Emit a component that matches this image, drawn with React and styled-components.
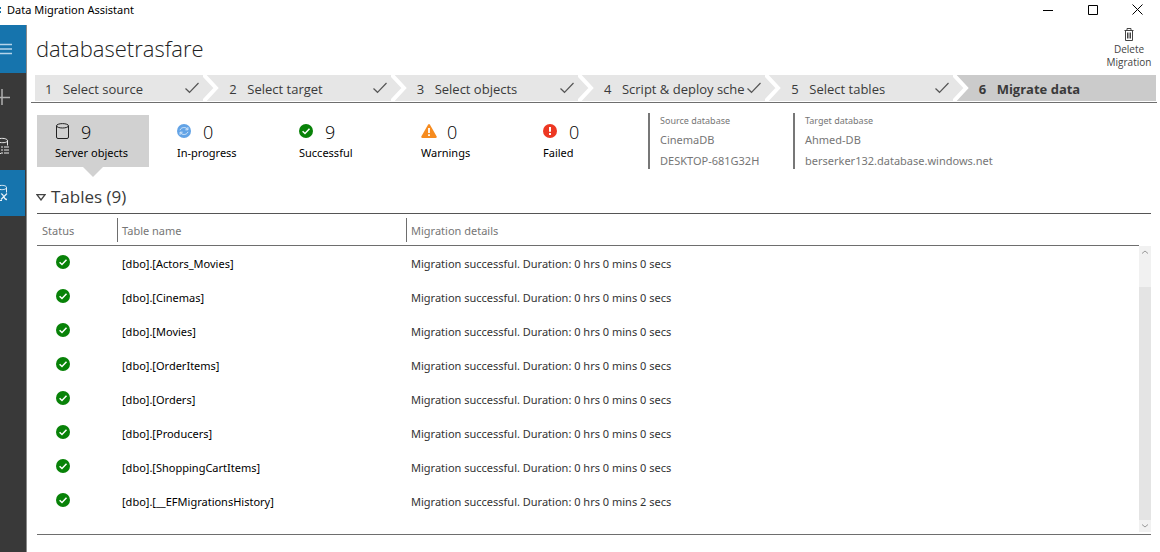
import React from "react";
import styled, { createGlobalStyle, css } from "styled-components";

const GlobalStyle = createGlobalStyle`
  * { box-sizing: border-box; }
  body {
    margin: 0;
    background: #fff;
    color: #000;
    font-family: "Noto Sans", "Open Sans", sans-serif;
    font-size: 11px;
    line-height: 16px;
  }
  button {
    border: 0;
    padding: 0;
    background: none;
    color: inherit;
    font: inherit;
    text-align: left;
  }
  h1, h2, p, ol, dl, dd { margin: 0; padding: 0; font-weight: inherit; }
  svg { display: block; flex: none; }
`;

const Window = styled.div`
  display: flex;
  flex-direction: column;
  min-height: 100vh;
`;

const TitleBar = styled.header`
  display: flex;
  align-items: center;
  height: 25px;
  padding-bottom: 6px;
`;

const AppTitle = styled.span`
  flex: 1;
  padding-left: 6px;
`;

const WindowButton = styled.button`
  display: grid;
  place-items: center;
  width: 45px;
  height: 18px;
`;

const WindowButtons = styled.div`
  display: flex;
`;

const Body = styled.div`
  display: flex;
  flex: 1;
`;

const Sidebar = styled.nav`
  flex: none;
  width: 27px;
  background: #393939;
  border-right: 1px solid #8a8a8a;
`;

const NavButton = styled.button`
  display: block;
  width: ${(p) => (p.$narrow ? "25px" : "100%")};
  height: ${(p) => (p.$narrow ? 46 : p.$tall ? 49 : 48)}px;
  color: ${(p) => (p.$active ? "#b5d4ea" : "#b0b0b0")};
  background: ${(p) => (p.$active ? "#1674ad" : "transparent")};
  overflow: hidden;
`;

const Main = styled.main`
  flex: 1;
  min-width: 0;
  padding-right: 3px;
`;

const PageHeader = styled.div`
  display: flex;
  justify-content: space-between;
  height: 50px;
  padding-left: 9px;
`;

const ProjectName = styled.h1`
  font-family: "Open Sans", sans-serif;
  font-size: 22px;
  line-height: 46px;
  font-weight: 300;
  color: #222;
`;

const DeleteButton = styled.button`
  display: flex;
  flex-direction: column;
  align-items: center;
  width: 56px;
  padding-top: 3px;
  font-family: "Open Sans", sans-serif;
  font-size: 10px;
  line-height: 13px;
  color: #444;
  text-align: center;
  svg { margin-bottom: 1px; }
`;

const Steps = styled.ol`
  display: grid;
  grid-template-columns: 168fr repeat(4, 187fr) 203fr;
  margin-left: 4px;
  padding: 0 1px 1px 4px;
  border-bottom: 1px solid #6e6e6e;
  list-style: none;
`;

const Step = styled.li`
  display: flex;
  background: ${(p) => (p.$current ? "#cbcbcb" : "#e6e6e6")};
`;

const StepButton = styled.button`
  display: flex;
  flex: 1;
  align-items: center;
  min-width: 0;
  height: 26px;
  padding-top: 2px;
  padding-left: ${(p) => (p.$first ? 10 : 9)}px;
  padding-right: 4px;
  font-family: "Open Sans", sans-serif;
  font-size: 13px;
  font-weight: ${(p) => (p.$current ? 700 : 400)};
  color: #3a3a3a;
  white-space: nowrap;
`;

const StepNumber = styled.span`
  flex: none;
  width: 18px;
`;

const StepName = styled.span`
  flex: 1;
  min-width: 0;
`;

const Summary = styled.section`
  display: flex;
  height: 76px;
  padding: 12px 0 0 10px;
`;

const Tiles = styled.div`
  display: flex;
  gap: 10px;
`;

const Tile = styled.button`
  position: relative;
  width: 112px;
  height: 52px;
  padding: 2px 0 0 18px;
  background: ${(p) => (p.$selected ? "#d1d1d1" : "transparent")};
  ${(p) =>
    p.$selected &&
    css`
      &::after {
        content: "";
        position: absolute;
        top: 100%;
        left: 46px;
        border: 10px solid transparent;
        border-top-color: #d1d1d1;
        border-bottom: 0;
      }
    `}
`;

const TileTop = styled.span`
  display: flex;
  align-items: center;
  height: 22px;
  font-family: "Open Sans", sans-serif;
  font-size: 18px;
  font-weight: 300;
`;

const TileIcon = styled.span`
  width: 16px;
  padding-bottom: 2px;
`;

const TileCount = styled.span`
  padding-left: 10px;
`;

const TileLabel = styled.span`
  display: block;
  line-height: 20px;
`;

const Databases = styled.div`
  display: flex;
  margin: -2px 0 0 11px;
`;

const Database = styled.dl`
  min-width: 145px;
  height: 56px;
  padding-left: 10px;
  border-left: 2px solid #777;
  color: #767676;
  line-height: 21px;
  dt { font-size: 9px; line-height: 16px; }
`;

const TablesHeading = styled.button`
  display: flex;
  align-items: center;
  gap: 5px;
  height: 34px;
  padding-top: 2px;
  padding-left: 9px;
  font-family: "Open Sans", sans-serif;
  font-size: 17px;
  color: #3a3a3a;
`;

const Grid = styled.div`
  display: flex;
  margin: 0 6px 0 10px;
  border-top: 1px solid #555;
  border-bottom: 1px solid #6e6e6e;
`;

const Table = styled.table`
  flex: 1;
  align-self: flex-start;
  table-layout: fixed;
  border-collapse: separate;
  border-spacing: 0;
`;

const HeadCell = styled.th`
  width: ${(p) => p.$width || "auto"};
  height: 32px;
  padding: 0;
  border-bottom: 1px solid #6e6e6e;
  color: #767676;
  font-weight: 400;
  text-align: left;
`;

const HeadLabel = styled.span`
  display: block;
  padding-top: 1px;
  padding-left: ${(p) => (p.$ruled ? 4 : 5)}px;
  border-left: ${(p) => (p.$ruled ? "1px solid #6e6e6e" : "0")};
  line-height: 23px;
`;

const Cell = styled.td`
  height: 34px;
  padding: 2px 0 0 5px;
  color: ${(p) => (p.$muted ? "#333" : "#000")};
`;

const StatusCell = styled.td`
  height: 34px;
  padding: 0 0 3px 19px;
`;

const ScrollBar = styled.div`
  display: flex;
  flex-direction: column;
  justify-content: space-between;
  width: 12px;
  height: 286px;
  margin: 32px 0 2px;
  background: #f1f1f1;
`;

const ScrollButton = styled.button`
  display: grid;
  place-items: center;
  width: 12px;
  height: 12px;
`;

const Thumb = styled.div`
  flex: 1;
  margin-top: 29px;
  background: #e4e4e4;
`;

const CheckCircle = () => (
  <svg width="14" height="14" viewBox="0 0 14 14" aria-hidden="true">
    <circle cx="7" cy="7" r="7" fill="#088208" />
    <path d="M3.6 7.2 6 9.5 10.5 4.8" fill="none" stroke="#fff" strokeWidth="1.5" />
  </svg>
);

const Cylinder = () => (
  <svg width="15" height="16" viewBox="0 0 15 16" fill="none" stroke="#222" aria-hidden="true">
    <ellipse cx="7.5" cy="2.8" rx="6" ry="2.2" />
    <path d="M1.5 2.8v11.2q0 1.500 1.500 1.500h9q1.500 0 1.500-1.500V2.8" />
  </svg>
);

const Progress = () => (
  <svg width="14" height="14" viewBox="0 0 14 14" aria-hidden="true">
    <circle cx="7" cy="7" r="7" fill="#62a3e6" />
    <path d="M3 6.2C4 3 9 2.600 10.700 5.500M11 7.800C10 11 5 11.400 3.300 8.500M10.900 3.200v2.600H8.400M3.100 10.800V8.200h2.500" fill="none" stroke="#d8e9fa" />
  </svg>
);

const Warning = () => (
  <svg width="16" height="14" viewBox="0 0 16 14" aria-hidden="true">
    <path d="M7 .7Q8-.6 9 .7L15.700 12.500Q16 14 14.500 14H1.500Q0 14 .3 12.500Z" fill="#f68b1f" />
    <path d="M8 4v5M8 10.300v1.800" stroke="#fff" strokeWidth="1.800" />
  </svg>
);

const Failed = () => (
  <svg width="14" height="14" viewBox="0 0 14 14" aria-hidden="true">
    <circle cx="7" cy="7" r="7" fill="#ed3823" />
    <path d="M7 3v4.800M7 9v2" stroke="#fff" strokeWidth="2" />
  </svg>
);

const Chevron = () => (
  <svg width="17" height="26" viewBox="0 0 17 26" aria-hidden="true">
    <path d="M0 0H3L14 13 3 26H0Z" fill="#e6e6e6" />
    <path d="M0-1 13 13 0 27" fill="none" stroke="#fff" strokeWidth="4" />
  </svg>
);

const Tick = () => (
  <svg width="14" height="14" viewBox="0 0 14 14" fill="none" stroke="#555" strokeWidth="1.200" aria-hidden="true">
    <path d="M.5 6.500 4.500 10.300 13.500 1" />
  </svg>
);

const Bin = () => (
  <svg width="10" height="14" viewBox="0 0 10 14" fill="none" stroke="#444" aria-hidden="true">
    <path d="M.5 2.500h9M3 2V.5h4V2M1.500 3v9.500h7V3M3.500 4.500v6M5 4.500v6M6.500 4.500v6" />
  </svg>
);

const navItems = [
  { name: "Menu", active: true, icon: <path d="M0 19.500h12M0 24h12M0 28.500h12" strokeWidth="1.500" /> },
  { name: "New project", icon: <path d="M0 24.500h10M2 16v16" strokeWidth="1.500" /> },
  {
    name: "Projects",
    tall: true,
    icon: (
      <g stroke="#e8e8e8">
        <path d="M0 16.500C4 16 7.500 17 7.500 18.700S4 21 0 20.500M7.500 18.500v5M0 31.500h1" />
        <path d="M1 25h2M4 25h5M1 28h2M4 28h5M1 31h2M4 31h5" />
      </g>
    ),
  },
  {
    name: "Current migration",
    active: true,
    narrow: true,
    icon: (
      <g stroke="#e6f1f9">
        <path d="M0 15.500C4 15 6.500 16 6.500 17.500S4 20 0 19.500M6.500 17.500v5M0 30.500h2" />
        <path d="M1 24C4 23 3 30 7 29.500M7 23.500 1 29.500" strokeWidth="1.300" />
      </g>
    ),
  },
];

const steps = ["Select source", "Select target", "Select objects", "Script & deploy sche", "Select tables", "Migrate data"];

const tiles = [
  { label: "Server objects", count: 9, icon: <Cylinder /> },
  { label: "In-progress", count: 0, icon: <Progress /> },
  { label: "Successful", count: 9, icon: <CheckCircle /> },
  { label: "Warnings", count: 0, icon: <Warning /> },
  { label: "Failed", count: 0, icon: <Failed /> },
];

const databases = [
  { label: "Source database", name: "CinemaDB", server: "DESKTOP-681G32H" },
  { label: "Target database", name: "Ahmed-DB", server: "berserker132.database.windows.net" },
];

const rows = [
  ["[dbo].[Actors_Movies]", 0],
  ["[dbo].[Cinemas]", 0],
  ["[dbo].[Movies]", 0],
  ["[dbo].[OrderItems]", 0],
  ["[dbo].[Orders]", 0],
  ["[dbo].[Producers]", 0],
  ["[dbo].[ShoppingCartItems]", 0],
  ["[dbo].[__EFMigrationsHistory]", 2],
];

export default function App() {
  return (
    <Window>
      <GlobalStyle />
      <TitleBar>
        <svg width="1" height="6" viewBox="0 0 1 6" aria-hidden="true">
          <path d="M0 0h1v2H0zM0 4h1v2H0z" fill="#1674ad" />
        </svg>
        <AppTitle>Data Migration Assistant</AppTitle>
        <WindowButtons>
          <WindowButton aria-label="Minimize">
            <svg width="10" height="10" stroke="#000"><path d="M0 5.500h10" /></svg>
          </WindowButton>
          <WindowButton aria-label="Maximize">
            <svg width="10" height="10" fill="none" stroke="#000"><path d="M.5.5h9v9h-9z" /></svg>
          </WindowButton>
          <WindowButton aria-label="Close">
            <svg width="11" height="11" stroke="#000"><path d="M.5.5 10.500 10.500M10.500.5.5 10.500" /></svg>
          </WindowButton>
        </WindowButtons>
      </TitleBar>
      <Body>
        <Sidebar aria-label="Main">
          {navItems.map((n) => (
            <NavButton key={n.name} aria-label={n.name} $active={n.active} $tall={n.tall} $narrow={n.narrow}>
              <svg width="26" height="48" fill="none" stroke="currentColor">{n.icon}</svg>
            </NavButton>
          ))}
        </Sidebar>
        <Main>
          <PageHeader>
            <ProjectName>databasetrasfare</ProjectName>
            <DeleteButton>
              <Bin />
              <span>Delete</span>
              <span>Migration</span>
            </DeleteButton>
          </PageHeader>
          <Steps>
            {steps.map((name, i) => {
              const current = i === steps.length - 1;
              return (
                <Step key={name} $current={current} aria-current={current ? "step" : undefined}>
                  {i > 0 && <Chevron />}
                  <StepButton $first={i === 0} $current={current}>
                    <StepNumber>{i + 1}</StepNumber>
                    <StepName>{name}</StepName>
                    {!current && <Tick />}
                  </StepButton>
                </Step>
              );
            })}
          </Steps>
          <Summary>
            <Tiles>
              {tiles.map((t, i) => (
                <Tile key={t.label} $selected={i === 0}>
                  <TileTop>
                    <TileIcon>{t.icon}</TileIcon>
                    <TileCount>{t.count}</TileCount>
                  </TileTop>
                  <TileLabel>{t.label}</TileLabel>
                </Tile>
              ))}
            </Tiles>
            <Databases>
              {databases.map((d) => (
                <Database key={d.label}>
                  <dt>{d.label}</dt>
                  <dd>{d.name}</dd>
                  <dd>{d.server}</dd>
                </Database>
              ))}
            </Databases>
          </Summary>
          <TablesHeading aria-expanded="true">
            <svg width="10" height="7" fill="none" stroke="#444" strokeWidth="1.300" aria-hidden="true">
              <path d="M1 .7h8L5 6Z" />
            </svg>
            Tables (9)
          </TablesHeading>
          <Grid>
            <Table>
              <thead>
                <tr>
                  <HeadCell $width="80px"><HeadLabel>Status</HeadLabel></HeadCell>
                  <HeadCell $width="289px"><HeadLabel $ruled>Table name</HeadLabel></HeadCell>
                  <HeadCell><HeadLabel $ruled>Migration details</HeadLabel></HeadCell>
                </tr>
              </thead>
              <tbody>
                {rows.map(([name, secs]) => (
                  <tr key={name}>
                    <StatusCell><CheckCircle /></StatusCell>
                    <Cell>{name}</Cell>
                    <Cell $muted>{`Migration successful. Duration: 0 hrs 0 mins ${secs} secs`}</Cell>
                  </tr>
                ))}
              </tbody>
            </Table>
            <ScrollBar>
              <ScrollButton aria-label="Scroll up">
                <svg width="6" height="4" fill="none" stroke="#999"><path d="M0 3.500 3 1l3 2.500" /></svg>
              </ScrollButton>
              <Thumb />
              <ScrollButton aria-label="Scroll down">
                <svg width="6" height="4" fill="none" stroke="#999"><path d="M0 .5 3 3l3-2.500" /></svg>
              </ScrollButton>
            </ScrollBar>
          </Grid>
        </Main>
      </Body>
    </Window>
  );
}
